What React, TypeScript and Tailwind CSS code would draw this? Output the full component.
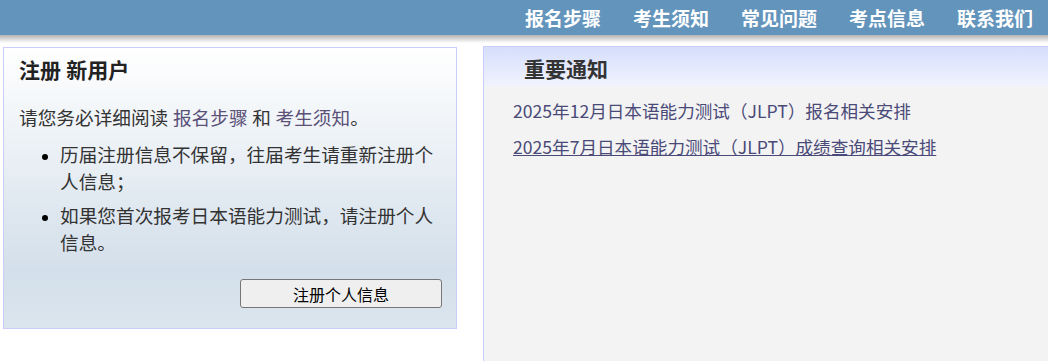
const navItems = ["报名步骤", "考生须知", "常见问题", "考点信息", "联系我们"];

const notices = [
  { title: "2025年12月日本语能力测试（JLPT）报名相关安排", underline: false },
  { title: "2025年7月日本语能力测试（JLPT）成绩查询相关安排", underline: true },
];

const serif = "font-['Liberation_Serif','Noto_Sans_CJK_SC',serif]";

function TopNav() {
  return (
    <header>
      <nav className="flex h-[35px] items-center justify-end bg-[#6394bc] font-['Noto_Sans_CJK_SC',sans-serif]">
        {navItems.map((item) => (
          <a key={item} href="#" className="px-4 text-[19px] leading-[35px] font-bold text-white last:pr-[15px]">
            {item}
          </a>
        ))}
      </nav>
      <div className="h-[8px] bg-gradient-to-b from-[#b4b4b4] to-white" />
    </header>
  );
}

function RegisterPanel() {
  return (
    <section
      className={`w-[454px] border border-[#ccccff] bg-gradient-to-b from-white via-[#d3dfea] via-80% to-[#dbe5ee] px-[15px] pt-[8px] pb-[20px] text-[#333] ${serif}`}
    >
      <h2 className="text-[21px] leading-[30px] font-bold text-[#222]">注册 新用户</h2>
      <p className="mt-[19px] text-[18.67px] leading-[27px]">
        请您务必详细阅读 <a href="#" className="text-[#5a5078]">报名步骤</a> 和{" "}
        <a href="#" className="text-[#5a5078]">考生须知</a>。
      </p>
      <ul className="mt-[10px] list-disc space-y-[7px] pl-[41px] text-[18.67px] leading-[27px] marker:text-black">
        <li>历届注册信息不保留，往届考生请重新注册个人信息；</li>
        <li>如果您首次报考日本语能力测试，请注册个人信息。</li>
      </ul>
      <div className="mt-[22px] mr-[-1px] flex justify-end">
        <button className="h-[29px] w-[202px] rounded-[3px] border border-[#767676] bg-[#efefef] font-['Noto_Sans_CJK_SC',sans-serif] text-[16px] text-black">
          注册个人信息
        </button>
      </div>
    </section>
  );
}

function NoticePanel() {
  return (
    <section className="flex min-h-[315px] flex-1 flex-col border-t border-l border-[#ccccff] bg-[#f3f3f3]">
      <div className={`h-[39px] bg-gradient-to-b from-[#d6defc] to-[#f1f3fe] pl-[40px] ${serif}`}>
        <h2 className="text-[21px] leading-[46px] font-bold text-[#333]">重要通知</h2>
      </div>
      <ul className="mt-[11px] space-y-[9px] pl-[29px] font-['Noto_Sans_CJK_SC',sans-serif] text-[17.6px] leading-[27px] text-[#4a4a78]">
        {notices.map((n) => (
          <li key={n.title}>
            <a href="#" className={n.underline ? "underline" : ""}>
              {n.title}
            </a>
          </li>
        ))}
      </ul>
    </section>
  );
}

export default function App() {
  return (
    <div className="h-[361px] overflow-hidden bg-white">
      <TopNav />
      <main className="flex">
        <div className="w-[483px] shrink-0 pt-[4px] pl-[3px]">
          <RegisterPanel />
        </div>
        <div className="flex flex-1 pt-[3px]">
          <NoticePanel />
        </div>
      </main>
    </div>
  );
}
